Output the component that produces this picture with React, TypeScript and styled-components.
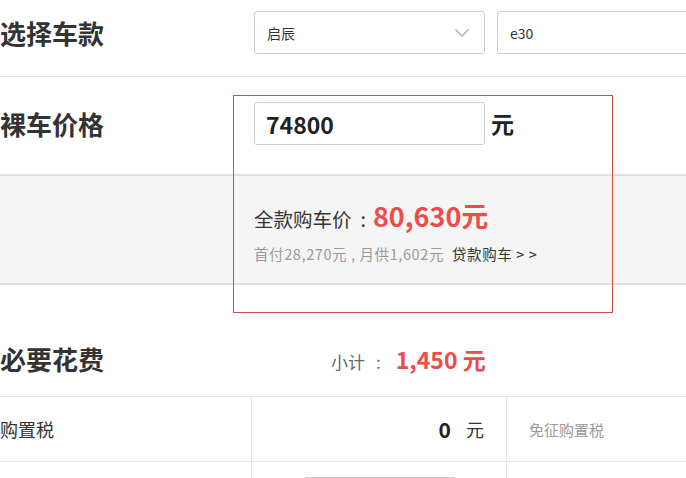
import React from "react";
import styled, { createGlobalStyle } from "styled-components";

const Global = createGlobalStyle`
  html, body { margin: 0; padding: 0; background: #fff; overflow: hidden; }
  body { font-family: "Noto Sans CJK SC", "Noto Sans", sans-serif; color: #333; }
`;

const Page = styled.div`
  position: relative;
  width: 760px;
`;

const Row = styled.div<{ $h: number; $pt?: number; $align?: string }>`
  display: flex;
  align-items: ${(p) => p.$align ?? "center"};
  height: ${(p) => p.$h}px;
  padding-top: ${(p) => p.$pt ?? 0}px;
  box-sizing: border-box;
  border-bottom: 1px solid #e2e2e2;
`;

const Title = styled.div`
  width: 254px;
  flex: none;
  font-size: 26px;
  font-weight: 700;
  line-height: 43px;
  color: #333;
`;

const Controls = styled.div`
  display: flex;
  align-items: center;
  gap: 12px;
`;

const Select = styled.div`
  width: 231px;
  height: 43px;
  box-sizing: border-box;
  border: 1px solid #cfcfcf;
  border-radius: 3px;
  display: flex;
  align-items: center;
  justify-content: space-between;
  padding: 0 14px 0 12px;
  font-size: 14px;
  color: #333;
`;

const Input = styled.div`
  width: 231px;
  height: 43px;
  box-sizing: border-box;
  border: 1px solid #cfcfcf;
  border-radius: 3px;
  display: flex;
  align-items: center;
  padding: 0 11px;
  font-size: 23px;
  font-weight: 700;
  color: #222;
`;

const Unit = styled.span`
  font-size: 23px;
  font-weight: 700;
  color: #222;
  margin-left: 6px;
  line-height: 43px;
`;

const Band = styled.div`
  background: #f5f5f5;
  border-top: 1px solid #dcdcdc;
  border-bottom: 2px solid #e0e0e0;
  height: 110px;
  box-sizing: border-box;
  padding: 22px 0 0 254px;
`;

const TotalLine = styled.div`
  display: flex;
  align-items: baseline;
  font-size: 19.5px;
  color: #333;
  line-height: 36px;
`;

const Colon = styled.span<{ $gap: number }>`
  margin-left: ${(p) => p.$gap}px;
`;

const Red = styled.span<{ $size: number; $gap: number }>`
  color: #f04b4b;
  font-weight: 700;
  font-size: ${(p) => p.$size}px;
  margin-left: ${(p) => p.$gap}px;
`;

const SubLine = styled.div`
  margin-top: 6px;
  font-size: 14.5px;
  letter-spacing: 0.6px;
  color: #999;
  line-height: 22px;
  white-space: pre;
`;

const Link = styled.span`
  color: #333;
  margin-left: 8px;
`;

const Section = styled.div`
  display: flex;
  align-items: center;
  height: 112px;
  padding-top: 36px;
  box-sizing: border-box;
  border-bottom: 1px solid #e6e6e6;
`;

const SectionTitle = styled.div`
  width: 331px;
  flex: none;
  font-size: 26px;
  font-weight: 700;
  color: #333;
`;

const Subtotal = styled.div`
  display: flex;
  align-items: baseline;
  font-size: 17px;
  color: #666;
`;

const TableRow = styled.div<{ $h: number }>`
  display: grid;
  grid-template-columns: 252px 255px 1fr;
  height: ${(p) => p.$h}px;
  border-bottom: 1px solid #e6e6e6;
`;

const Cell = styled.div<{ $justify?: string; $pad?: string }>`
  display: flex;
  align-items: center;
  justify-content: ${(p) => p.$justify ?? "flex-start"};
  padding: ${(p) => p.$pad ?? "0"};
  border-right: 1px solid #e6e6e6;
  box-sizing: border-box;
  &:last-child { border-right: none; }
`;

const CellLabel = styled.span`
  font-size: 18px;
  color: #333;
`;

const Amount = styled.span`
  font-size: 21px;
  font-weight: 700;
  color: #222;
`;

const AmountUnit = styled.span`
  font-size: 18px;
  color: #333;
  margin-left: 15px;
`;

const Note = styled.span`
  font-size: 15px;
  color: #999;
`;

const SmallInput = styled.div`
  align-self: flex-start;
  margin: 15px 0 0 51px;
  width: 152px;
  height: 30px;
  border: 1px solid #cfcfcf;
  border-radius: 3px;
`;

const Highlight = styled.div`
  position: absolute;
  left: 233px;
  top: 95px;
  width: 380px;
  height: 218px;
  box-sizing: border-box;
  border: 1px solid #d54a4a;
  pointer-events: none;
`;

const Chevron = () => (
  <svg width="16" height="10" viewBox="0 0 16 10" fill="none">
    <path d="M1.5 1.5 L8 8 L14.5 1.5" stroke="#b5b5b5" strokeWidth="1.6" />
  </svg>
);

export default function App() {
  return (
    <Page>
      <Global />
      <Row $h={77} $pt={11} $align="flex-start">
        <Title>选择车款</Title>
        <Controls>
          <Select>
            <span>启辰</span>
            <Chevron />
          </Select>
          <Select>
            <span>e30</span>
          </Select>
        </Controls>
      </Row>
      <Row $h={98} $pt={25} $align="flex-start">
        <Title>裸车价格</Title>
        <Input>74800</Input>
        <Unit>元</Unit>
      </Row>
      <Band>
        <TotalLine>
          <span>全款购车价</span>
          <Colon $gap={9}>:</Colon>
          <Red $size={27} $gap={7}>80,630元</Red>
        </TotalLine>
        <SubLine>
          {"首付28,270元 , 月供1,602元"}
          <Link>{"贷款购车 > >"}</Link>
        </SubLine>
      </Band>
      <Section>
        <SectionTitle>必要花费</SectionTitle>
        <Subtotal>
          <span>小计</span>
          <Colon $gap={11}>:</Colon>
          <Red $size={23} $gap={15}>1,450 元</Red>
        </Subtotal>
      </Section>
      <TableRow $h={64}>
        <Cell>
          <CellLabel>购置税</CellLabel>
        </Cell>
        <Cell $justify="flex-end" $pad="0 22px 0 0">
          <Amount>0</Amount>
          <AmountUnit>元</AmountUnit>
        </Cell>
        <Cell $pad="0 0 0 22px">
          <Note>免征购置税</Note>
        </Cell>
      </TableRow>
      <TableRow $h={64}>
        <Cell />
        <Cell>
          <SmallInput />
        </Cell>
        <Cell />
      </TableRow>
      <Highlight />
    </Page>
  );
}
